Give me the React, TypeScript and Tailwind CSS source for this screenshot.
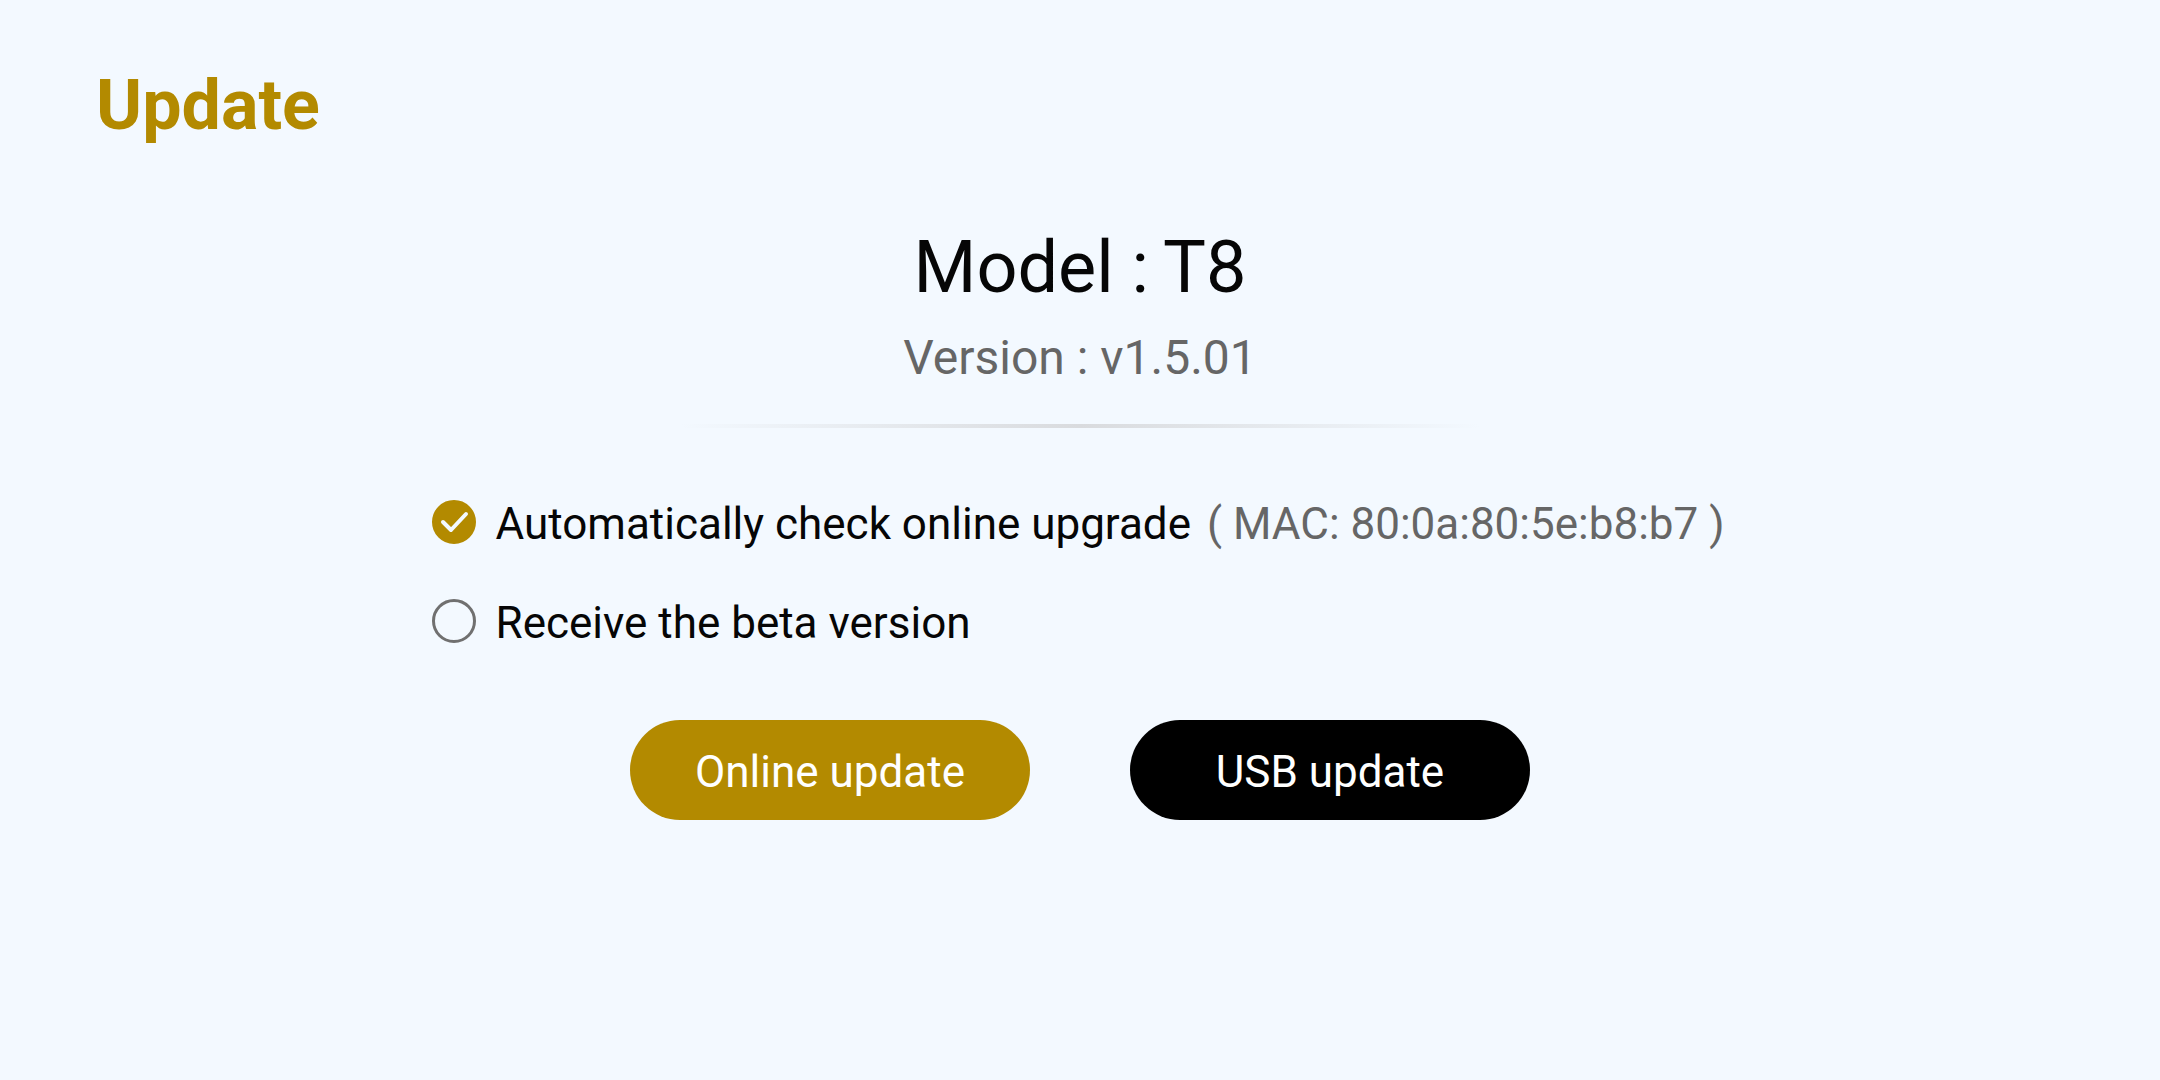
import { useState } from "react";

export default function App() {
  const [autoCheck, setAutoCheck] = useState(true);
  const [beta, setBeta] = useState(false);

  const options = [
    {
      id: "auto",
      label: "Automatically check online upgrade",
      note: "( MAC: 80:0a:80:5e:b8:b7 )",
      checked: autoCheck,
      onChange: setAutoCheck,
    },
    {
      id: "beta",
      label: "Receive the beta version",
      note: "",
      checked: beta,
      onChange: setBeta,
    },
  ];

  const buttonStyle =
    "h-[100px] w-[400px] rounded-full pt-1 text-[44px] leading-[52px] text-white";

  return (
    <div className="min-h-screen bg-[#f3f9ff] font-['Roboto',sans-serif] text-[#060606]">
      <h1 className="px-24 pt-16 text-[70px] leading-[82px] font-bold text-[#b38a00]">
        Update
      </h1>

      <main className="flex flex-col items-center pt-20">
        <h2 className="flex gap-3.5 text-[72px] leading-[84px]">
          <span>Model :</span>
          <span>T8</span>
        </h2>
        <p className="mt-5 text-[48px] leading-[56px] text-[#666666]">
          Version : v1.5.01
        </p>
        <div className="mt-[38px] h-1 w-[800px] bg-linear-to-r from-transparent via-[#d9dbde] to-transparent" />

        <div className="mt-[70px] flex flex-col gap-[47px] pr-1">
          {options.map((option) => (
            <div key={option.id} className="flex">
              <label htmlFor={option.id} className="flex gap-5">
                <span className="grid content-start pt-0.5">
                  <input
                    id={option.id}
                    type="checkbox"
                    checked={option.checked}
                    onChange={(e) => option.onChange(e.target.checked)}
                    className="peer col-start-1 row-start-1 size-11 appearance-none rounded-full border-3 border-[#707070] checked:border-[#b38a00] checked:bg-[#b38a00]"
                  />
                  <svg
                    viewBox="0 0 44 44"
                    className="pointer-events-none invisible col-start-1 row-start-1 size-11 peer-checked:visible"
                    fill="none"
                    stroke="#f3f9ff"
                    strokeWidth="4"
                    strokeLinecap="round"
                    strokeLinejoin="round"
                  >
                    <path d="M11 22 19 30 34 14" />
                  </svg>
                </span>
                <span className="text-[44px] leading-[52px]">
                  {option.label}
                </span>
              </label>
              {option.note && (
                <span className="ml-4 text-[44px] leading-[52px] text-[#666666]">
                  {option.note}
                </span>
              )}
            </div>
          ))}
        </div>

        <div className="mt-[71px] flex gap-[100px]">
          <button type="button" className={`bg-[#b38a00] ${buttonStyle}`}>
            Online update
          </button>
          <button type="button" className={`bg-black ${buttonStyle}`}>
            USB update
          </button>
        </div>
      </main>
    </div>
  );
}
